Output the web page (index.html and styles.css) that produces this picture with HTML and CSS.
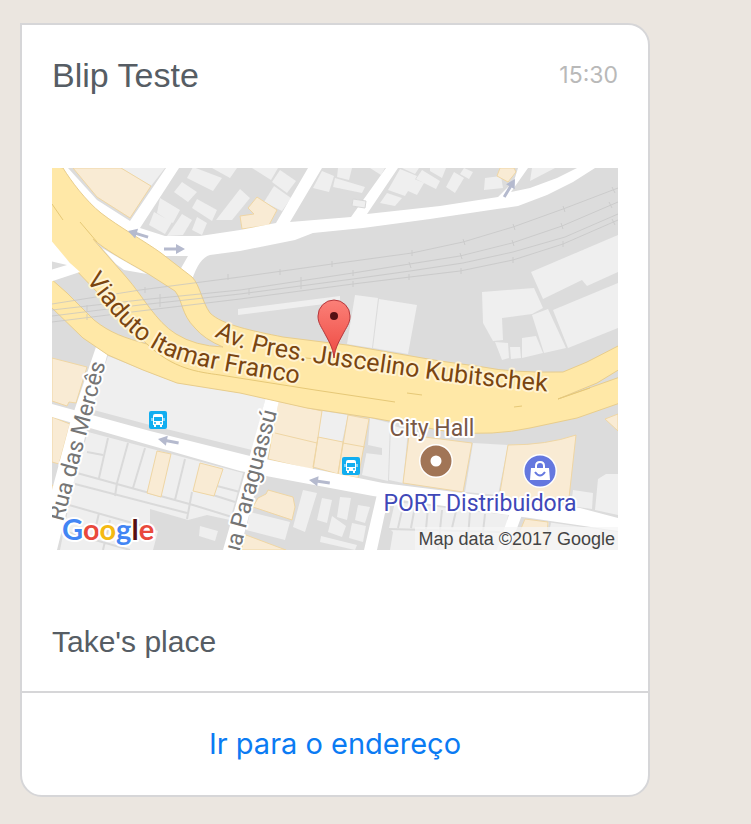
FILE: index.html
```html
<!DOCTYPE html>
<html lang="pt-BR">
<head>
<meta charset="utf-8">
<meta name="viewport" content="width=device-width, initial-scale=1">
<title>Blip Teste</title>
<link rel="stylesheet" href="styles.css">
</head>
<body>
<article class="card">
  <div class="content">
    <header class="header">
      <h1 class="sender">Blip Teste</h1>
      <time class="time">15:30</time>
    </header>
    <svg class="map" viewBox="52 168 566 382" role="img" aria-label="Take's place">
      <defs>
        <path id="viaduto" d="M86 280C109 310 130 341 168 356S250 374 320 388"/>
        <path id="avenida" d="M214 336C230 345 245 350 262 354C300 361 400 375 430 379S520 390 570 393"/>
        <linearGradient id="pin" x1="0" y1="0" x2="0" y2="1"><stop offset="0" stop-color="#fb8078"/><stop offset="1" stop-color="#ee4a42"/></linearGradient>
        <g id="bus">
          <rect width="18" height="18" rx="2" fill="#12aef0"/>
          <path d="M4 5Q4 3 6 3H12Q14 3 14 5V14H13V16H11V14H7V16H5V14H4Z" fill="#fff"/>
          <path d="M5 6H13V10H5Z" fill="#12aef0"/>
          <circle cx="6" cy="12" r="1" fill="#12aef0"/><circle cx="12" cy="12" r="1" fill="#12aef0"/>
          <path d="M3 7V10M15 7V10" stroke="#fff"/>
        </g>
        <path id="arrow" d="M0 0L9-5V-1.500H21V1.500H9V5Z" fill="#b5bace"/>
      </defs>
      <path class="ground" d="M52 168H618V550H52Z"/>

      <g class="plot">
        <path d="M121 168H165L151 186Z"/>
        <path d="M193 167L222 178L213 191L187 178ZM182 182L197 192L188 202L174 192ZM197 199L217 210L212 221L192 208ZM240 189L250 198L232 220L216 220ZM160 198L180 210L173 223L157 213ZM154 212L172 222L165 234L149 225ZM182 214L192 220L183 235L167 236ZM197 217L207 223L202 235L192 230ZM212 168H237L230 178Z"/>
        <path d="M252 168H278L271 180ZM280 170L296 181L287 193L272 182ZM274 186L291 198L282 211L264 202ZM322 171L334 176L329 192L313 188ZM338 168H352L349 180L337 177ZM335 178L365 187L362 193L333 187ZM370 168H385L381 175ZM353 199L366 201L365 208L352 206ZM400 169L417 176L405 196L388 190ZM387 193L402 198L395 206L380 203ZM412 178L424 183L417 195L408 191ZM402 168H419L415 174ZM422 170L440 181L436 189L416 179ZM430 168H446L442 178L430 171ZM454 172L464 178L455 193L446 187ZM464 168L473 172L469 179L460 174ZM485 178L501 176L503 188L484 190ZM532 168H555L530 181Z"/>
        <path d="M531 272L618 235V272L587 286L582 280L543 299ZM482 292L534 288L543 308L532 314L502 318L503 340L493 341L483 323ZM495 342L508 343L509 358L502 360ZM510 347H520L521 358L511 359ZM522 338L536 336L543 353L522 358ZM532 315L548 309L566 348L544 353ZM553 310L618 283V328L568 348Z"/>
        <path d="M238 309L340 296V302L238 315ZM355 295L378 298L372 348L347 344ZM379 299L417 305L408 354L373 348Z"/>
        <path d="M108 356L143 370L177 383L266 397L252 450L150 425L90 409Z"/>
        <path d="M88 432L243 473L230 520L207 515L188 520L150 509V528L158 531L153 550H60L75 475ZM200 526L218 531L215 541L199 536Z"/>
        <path d="M322 411L348 415L342 442L318 437ZM370 418L390 423L388 481L362 475L368 445ZM391 425L408 430L403 483L389 480ZM473 443L508 445L498 495L465 492ZM573 490L593 493L592 509L571 506ZM598 479L606 474H618V515L595 510Z"/>
        <path d="M250 512L290 522L285 540L246 530ZM303 490L317 493L305 532L293 527ZM322 498L332 500L327 523L317 520ZM340 497L351 498L347 520L337 517ZM332 516L346 526L342 537L328 532ZM358 505L370 507L365 523L355 520ZM352 523L366 526L363 542L349 538ZM321 536L357 545L355 550L320 542Z"/>
        <path d="M395 502L508 515L503 550H390L393 532L389 528ZM525 519L618 532V550H512Z"/>
      </g>
      <g class="lots">
        <path d="M108 438L99 478M128 443L117 483M145 448L133 488M185 459L175 500M192 492L187 519M77 473L193 505L232 517M75 484L187 513M117 483L115 496M87 452L103 455M217 486L240 492M213 495L235 502M69 505L150 528M99 513L96 526M60 530L130 550M110 520L103 550"/>
        <path d="M403 506L398 528M415 506L411 528M428 508L424 550M442 510L438 550M456 511L452 528M470 512L467 550M485 514L481 550M389 529L500 532M550 522L545 550"/>
        <path d="M368 445L382 448V455L365 453Z" class="ground"/>
      </g>
      <g class="site">
        <path d="M73 168H121L151 186L130 218L97 197Z"/>
        <path d="M257 197L277 210L269 225L242 229L240 216L254 214L248 208ZM500 168H514L516 172L508 182L497 176Z"/>
        <path d="M52 358L87 367L76 403L69 402L67 406L52 401ZM52 417L70 424L59 464L52 462ZM52 485L57 487L53 502H52Z"/>
        <path d="M157 451L171 454L161 497L147 493ZM200 463L223 469L214 496L193 491Z"/>
        <path d="M278 401L322 411L313 470L268 459ZM318 437L343 442L338 474L313 467ZM348 415L369 419L358 478L338 474Z"/>
        <path d="M275 433L317 443M343 443L365 447" fill="none"/>
        <path d="M409 435L472 443L463 492L403 483ZM508 445Q547 445 576 435L568 507L499 498ZM605 419L618 414V431Z"/>
        <path d="M258 498L266 494L268 490L293 497L295 507L292 520L253 507ZM246 535L286 550H241ZM525 519L548 522L546 550H512Z"/>
      </g>

      <g class="street">
        <path d="M62 168H68L97 200L130 221L166 168H179L140 228L165 236L200 236L240 230L276 223L308 168H322L290 222L351 217L386 168H398L367 214L440 206L498 197L514 181L518 168H528L511 192L530 188L557 178L577 168H595L573 182L547 195L518 206L497 209L430 219L363 228L313 233L295 240L240 251L210 255Q199 258 192 280L180 270L188 256H160L110 238Z"/>
        <path d="M52 404L150 431L250 456L383 483L580 508L618 518V531L530 518L373 496L240 471L90 428L52 417Z"/>
        <path d="M96 347L108 352L88 425L75 477L57 550H52V490L70 423ZM266 397L279 400L267 460L255 492L240 550H223L245 473ZM378 490H390L377 550H364ZM510 512H523L509 550H497Z"/>
      </g>
      <path d="M353 199L366 201L365 208L352 206Z" class="shed"/>

      <path class="highway" d="M50 166L63 168C71 181 86 201 101 213C119 227 146 242 161 253L192 277C200 285 202 302 210 313C222 325 253 331 283 337L347 345L440 361L483 367Q512 373 563 372L587 362L620 345V369L597 383L558 399L620 377V403L577 418L530 428Q494 436 450 432L373 418L307 408L240 393L177 383L143 370L108 355L83 338L50 306Z"/>
      <path class="ground edge" d="M50 241L72 266L98 293C115 311 129 328 147 344C125 338 110 333 94 320L67 293L50 278Z"/>
      <path class="ground edge" d="M93 239C110 254 146 272 150 275L175 291C183 301 181 314 195 328Q204 339 223 347Q195 346 176 334C156 322 142 295 127 278Z"/>
      <path class="street" d="M50 239L70 263L80 272L50 282V270L67 265L50 261ZM102 248L119 258L147 274L124 270L116 264Z"/>
      <path class="seam" d="M52 204L63 220M80 222L97 242M147 344C173 369 198 372 220 375L315 390L395 402M280 355L315 359M407 393L422 395M514 407L522 406M558 399L590 388"/>

      <g class="rail">
        <path d="M52 304L140 290L240 277L332 264L412 253L463 242L513 227L563 209L618 188"/>
        <path d="M52 310L140 300L240 290L353 273L460 256L512 243L562 226L618 202"/>
        <path d="M52 316L140 305L240 294L353 279L410 271L463 263L513 252L565 237L618 214"/>
        <path d="M52 322L140 311L240 299L353 284L410 277L460 271L513 260L563 244L618 220"/>
        <path d="M145 287V293M228 274V280M280 269V275M332 261V267M412 250V256M463 239L465 245M513 224L515 230M563 206L565 212M612 187L615 193M301 277V283M353 270V276M409 262L411 268M460 253L462 259M512 240L514 246M561 223L563 229M609 202L612 208M249 289V295M301 283V289M353 281V287M409 274V280M461 268V274M513 257V263M563 241V247M612 219L615 225M160 294V300M160 300V307M87 305V311M87 314V320"/>
      </g>
      <use href="#arrow" transform="translate(128 231) rotate(17)"/>
      <use href="#arrow" transform="translate(185 249) rotate(180)"/>
      <use href="#arrow" transform="translate(515 179) rotate(121)"/>
      <use href="#arrow" transform="translate(158 439) rotate(11)"/>
      <use href="#arrow" transform="translate(309 480) rotate(8)"/>

      <g class="label street-name">
        <text transform="translate(63 522) rotate(-75)">Rua das Mercês</text>
        <text transform="translate(277 412) rotate(-75)" text-anchor="end">Rua Paraguassú</text>
      </g>
      <g class="label road-name">
        <text><textPath href="#viaduto">Viaduto Itamar Franco</textPath></text>
        <text><textPath href="#avenida">Av. Pres. Juscelino Kubitschek</textPath></text>
      </g>
      <use href="#bus" x="149" y="411"/>
      <use href="#bus" x="342" y="457"/>
      <g class="label place-name">
        <text class="hall" x="432" y="436">City Hall</text>
        <text class="shop" x="480" y="511">PORT Distribuidora</text>
      </g>
      <circle cx="436" cy="461" r="17" fill="#fff"/>
      <circle cx="436" cy="461" r="10.500" fill="none" stroke="#a17556" stroke-width="10"/>
      <circle cx="540" cy="471" r="17" fill="#fff"/>
      <circle cx="540" cy="471" r="15.500" fill="#6578df"/>
      <path d="M531 468H549L550 480H530Z" fill="#fff"/>
      <path d="M536 469V466Q536 462 540 462T544 466V469" fill="none" stroke="#fff" stroke-width="2"/>
      <path d="M535 472Q540 479 545 472" fill="none" stroke="#6578df" stroke-width="2"/>

      <path d="M334 358C333 347 328 340 324 332C320 325 318 322 318 316A16 16 0 0 1 350 316C350 322 348 325 344 332C340 340 335 347 334 358Z" fill="url(#pin)" stroke="#b5373b"/>
      <circle cx="334" cy="316" r="4" fill="#551014"/>
      <text class="label logo" x="62" y="540"><tspan fill="#4285f4">G</tspan><tspan fill="#e9493c">o</tspan><tspan fill="#f4b913">o</tspan><tspan fill="#4285f4">g</tspan><tspan fill="#561013">l</tspan><tspan fill="#e9493c">e</tspan></text>
      <path d="M415 527H618V550H415Z" fill="#f5f5f5" opacity=".75"/>
      <text class="credit" x="615" y="545">Map data ©2017 Google</text>
    </svg>
    <p class="place">Take's place</p>
  </div>
  <a class="action" href="#">Ir para o endereço</a>
</article>
</body>
</html>
```

FILE: styles.css
```css
* { box-sizing: border-box; }

body {
  margin: 0;
  padding: 23px 101px 27px 20px;
  background: #ebe6e0;
  color: #565d64;
  font-family: "Liberation Sans", Arial, sans-serif;
}

.card {
  overflow: hidden;
  background: #fff;
  border: 2px solid #d6d6d8;
  border-radius: 0 22px 22px 22px;
}

.content { padding: 30px; }

.header {
  display: flex;
  align-items: center;
  justify-content: space-between;
  margin-bottom: 73px;
}

.sender {
  margin: 0;
  font-size: 34px;
  font-weight: 400;
  line-height: 40px;
}

.time {
  color: #b9b9b9;
  font-family: Inter, sans-serif;
  font-size: 23px;
  line-height: 40px;
}

.map { display: block; width: 100%; height: auto; }

.place {
  margin: 73px 0 0;
  font-size: 30px;
  line-height: 38px;
}

.action {
  display: block;
  padding: 32px 30px;
  border-top: 2px solid #d6d6d8;
  color: #0b7bf3;
  font-family: Inter, sans-serif;
  font-size: 29px;
  line-height: 38px;
  text-align: center;
  text-decoration: none;
}

.ground { fill: #dcdcdc; }
.plot { fill: #efefef; }
.shed { fill: #efefef; stroke: #d8d8d8; }
.lots { fill: none; stroke: #dadada; stroke-width: 2; }
.lots .ground { fill: #dcdcdc; stroke: none; }
.site { fill: #f9ebd4; stroke: #efd6a4; stroke-width: 1; }
.street { fill: #fff; }
.highway { fill: #ffe8a7; stroke: #e8cd8c; stroke-width: 1; }
.edge { stroke: #e8cd8c; stroke-width: 1; }
.seam { fill: none; stroke: #e6c877; stroke-width: 1; }
.rail { fill: none; stroke: #c4c4c4; stroke-width: 1; opacity: .7; }

.label {
  font-family: Roboto, sans-serif;
  paint-order: stroke;
  stroke: #fff;
  stroke-width: 4px;
  stroke-linejoin: round;
}
.street-name { fill: #757575; font-size: 23px; }
.road-name { fill: #7a4510; stroke: #fff3d2; font-size: 25px; }
.place-name { font-size: 23px; text-anchor: middle; }
.hall { fill: #795846; }
.shop { fill: #3f48b8; }
.logo { font-family: Lato, sans-serif; font-size: 29px; font-weight: 700; }
.credit {
  fill: #444;
  font-family: "Liberation Sans", Arial, sans-serif;
  font-size: 18px;
  text-anchor: end;
}
```
